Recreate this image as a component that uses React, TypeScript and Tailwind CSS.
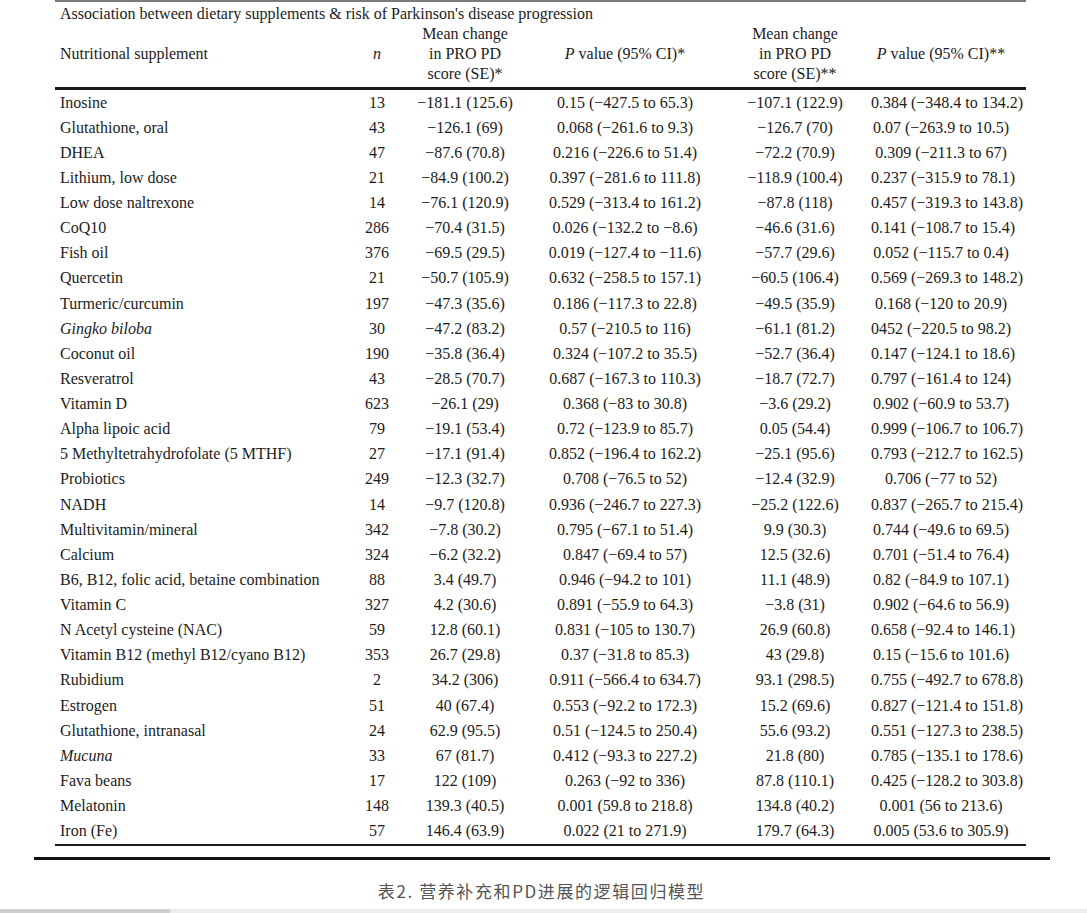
import React from "react";

type Row = [string, string, string, string, string, string, boolean?];

const rows: Row[] = [
  ["Inosine", "13", "−181.1 (125.6)", "0.15 (−427.5 to 65.3)", "−107.1 (122.9)", "0.384 (−348.4 to 134.2)"],
  ["Glutathione, oral", "43", "−126.1 (69)", "0.068 (−261.6 to 9.3)", "−126.7 (70)", "0.07 (−263.9 to 10.5)"],
  ["DHEA", "47", "−87.6 (70.8)", "0.216 (−226.6 to 51.4)", "−72.2 (70.9)", "0.309 (−211.3 to 67)"],
  ["Lithium, low dose", "21", "−84.9 (100.2)", "0.397 (−281.6 to 111.8)", "−118.9 (100.4)", "0.237 (−315.9 to 78.1)"],
  ["Low dose naltrexone", "14", "−76.1 (120.9)", "0.529 (−313.4 to 161.2)", "−87.8 (118)", "0.457 (−319.3 to 143.8)"],
  ["CoQ10", "286", "−70.4 (31.5)", "0.026 (−132.2 to −8.6)", "−46.6 (31.6)", "0.141 (−108.7 to 15.4)"],
  ["Fish oil", "376", "−69.5 (29.5)", "0.019 (−127.4 to −11.6)", "−57.7 (29.6)", "0.052 (−115.7 to 0.4)"],
  ["Quercetin", "21", "−50.7 (105.9)", "0.632 (−258.5 to 157.1)", "−60.5 (106.4)", "0.569 (−269.3 to 148.2)"],
  ["Turmeric/curcumin", "197", "−47.3 (35.6)", "0.186 (−117.3 to 22.8)", "−49.5 (35.9)", "0.168 (−120 to 20.9)"],
  ["Gingko biloba", "30", "−47.2 (83.2)", "0.57 (−210.5 to 116)", "−61.1 (81.2)", "0452 (−220.5 to 98.2)", true],
  ["Coconut oil", "190", "−35.8 (36.4)", "0.324 (−107.2 to 35.5)", "−52.7 (36.4)", "0.147 (−124.1 to 18.6)"],
  ["Resveratrol", "43", "−28.5 (70.7)", "0.687 (−167.3 to 110.3)", "−18.7 (72.7)", "0.797 (−161.4 to 124)"],
  ["Vitamin D", "623", "−26.1 (29)", "0.368 (−83 to 30.8)", "−3.6 (29.2)", "0.902 (−60.9 to 53.7)"],
  ["Alpha lipoic acid", "79", "−19.1 (53.4)", "0.72 (−123.9 to 85.7)", "0.05 (54.4)", "0.999 (−106.7 to 106.7)"],
  ["5 Methyltetrahydrofolate (5 MTHF)", "27", "−17.1 (91.4)", "0.852 (−196.4 to 162.2)", "−25.1 (95.6)", "0.793 (−212.7 to 162.5)"],
  ["Probiotics", "249", "−12.3 (32.7)", "0.708 (−76.5 to 52)", "−12.4 (32.9)", "0.706 (−77 to 52)"],
  ["NADH", "14", "−9.7 (120.8)", "0.936 (−246.7 to 227.3)", "−25.2 (122.6)", "0.837 (−265.7 to 215.4)"],
  ["Multivitamin/mineral", "342", "−7.8 (30.2)", "0.795 (−67.1 to 51.4)", "9.9 (30.3)", "0.744 (−49.6 to 69.5)"],
  ["Calcium", "324", "−6.2 (32.2)", "0.847 (−69.4 to 57)", "12.5 (32.6)", "0.701 (−51.4 to 76.4)"],
  ["B6, B12, folic acid, betaine combination", "88", "3.4 (49.7)", "0.946 (−94.2 to 101)", "11.1 (48.9)", "0.82 (−84.9 to 107.1)"],
  ["Vitamin C", "327", "4.2 (30.6)", "0.891 (−55.9 to 64.3)", "−3.8 (31)", "0.902 (−64.6 to 56.9)"],
  ["N Acetyl cysteine (NAC)", "59", "12.8 (60.1)", "0.831 (−105 to 130.7)", "26.9 (60.8)", "0.658 (−92.4 to 146.1)"],
  ["Vitamin B12 (methyl B12/cyano B12)", "353", "26.7 (29.8)", "0.37 (−31.8 to 85.3)", "43 (29.8)", "0.15 (−15.6 to 101.6)"],
  ["Rubidium", "2", "34.2 (306)", "0.911 (−566.4 to 634.7)", "93.1 (298.5)", "0.755 (−492.7 to 678.8)"],
  ["Estrogen", "51", "40 (67.4)", "0.553 (−92.2 to 172.3)", "15.2 (69.6)", "0.827 (−121.4 to 151.8)"],
  ["Glutathione, intranasal", "24", "62.9 (95.5)", "0.51 (−124.5 to 250.4)", "55.6 (93.2)", "0.551 (−127.3 to 238.5)"],
  ["Mucuna", "33", "67 (81.7)", "0.412 (−93.3 to 227.2)", "21.8 (80)", "0.785 (−135.1 to 178.6)", true],
  ["Fava beans", "17", "122 (109)", "0.263 (−92 to 336)", "87.8 (110.1)", "0.425 (−128.2 to 303.8)"],
  ["Melatonin", "148", "139.3 (40.5)", "0.001 (59.8 to 218.8)", "134.8 (40.2)", "0.001 (56 to 213.6)"],
  ["Iron (Fe)", "57", "146.4 (63.9)", "0.022 (21 to 271.9)", "179.7 (64.3)", "0.005 (53.6 to 305.9)"],
];

const grid = "grid grid-cols-[300px_44px_132px_188px_152px_140px]";

export default function App() {
  return (
    <div className="w-[1087px] h-[913px] bg-white overflow-hidden flex flex-col text-[#1c1c1c] font-['Liberation_Serif','DejaVu_Serif',serif] text-[16px]">
      <div className="ml-[55px] w-[971px] border-t-2 border-[#7a7a7a]">
        <div className="pl-[5px] pt-[2px] leading-[20px] h-[22px]">
          Association between dietary supplements &amp; risk of Parkinson's disease progression
        </div>
        <div className={`${grid} leading-[20px] pb-[3px] border-b-[3px] border-[#1a1a1a]`}>
          <div className="pl-[5px] flex items-center">Nutritional supplement</div>
          <div className="flex items-center justify-center italic">n</div>
          <div className="text-center">
            Mean change
            <br />
            in PRO PD
            <br />
            score (SE)*
          </div>
          <div className="flex items-center justify-center">
            <span>
              <i>P</i> value (95% CI)*
            </span>
          </div>
          <div className="text-center">
            Mean change
            <br />
            in PRO PD
            <br />
            score (SE)**
          </div>
          <div className="flex items-center justify-center">
            <span>
              <i>P</i> value (95% CI)**
            </span>
          </div>
        </div>
        <div className="border-b-2 border-[#1a1a1a]">
          {rows.map((r, i) => (
            <div key={i} className={`${grid} h-[25.14px] items-center leading-[20px]`}>
              <div className={`pl-[5px] whitespace-nowrap ${r[6] ? "italic" : ""}`}>{r[0]}</div>
              <div className="text-center">{r[1]}</div>
              <div className="text-center whitespace-nowrap">{r[2]}</div>
              <div className="text-center whitespace-nowrap">{r[3]}</div>
              <div className="text-center whitespace-nowrap">{r[4]}</div>
              <div className="text-center whitespace-nowrap">{r[5]}</div>
            </div>
          ))}
        </div>
      </div>
      <div className="ml-[34px] w-[1016px] h-[3px] bg-[#111] mt-[11px]" />
      <div className="flex justify-center pr-[4px] mt-[19px] leading-[24px] text-[17px] tracking-[1.6px] text-[#555] font-['Noto_Sans_CJK_SC','Noto_Sans',sans-serif]">
        表2. 营养补充和PD进展的逻辑回归模型
      </div>
      <div className="mt-auto h-[4px] flex">
        <div className="w-[170px] bg-[#cfcfcf]" />
        <div className="flex-1 bg-[#ececec]" />
      </div>
    </div>
  );
}
